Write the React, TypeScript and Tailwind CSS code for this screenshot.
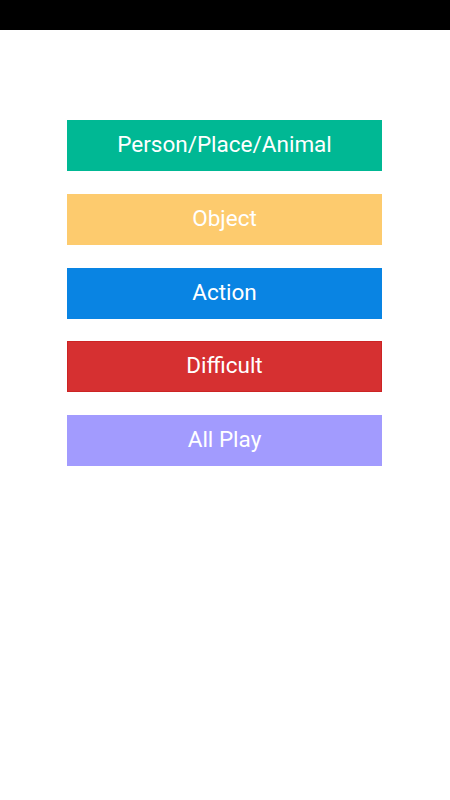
const categories = [
  { label: "Person/Place/Animal", cls: "bg-[#00b894] border-[#00b894]" },
  { label: "Object", cls: "bg-[#fdcb6e] border-[#fdcb6e]" },
  { label: "Action", cls: "bg-[#0984e3] border-[#0984e3]" },
  { label: "Difficult", cls: "bg-[#d63031] border-[#cc2424]" },
  { label: "All Play", cls: "bg-[#a29bfe] border-[#a29bfe]" },
];

export default function App() {
  return (
    <div className="min-h-[800px] w-[450px] bg-white font-['Roboto',sans-serif]">
      {/* status bar */}
      <div className="h-[30px] bg-black" />

      <div className="flex flex-col gap-[22.75px] pt-[90px] px-[67px]">
        {categories.map(c => (
          <button
            key={c.label}
            className={`h-[51px] w-[315px] border flex items-center justify-center pb-[1px] text-white text-[22.5px] ${c.cls}`}
          >
            {c.label}
          </button>
        ))}
      </div>
    </div>
  );
}
